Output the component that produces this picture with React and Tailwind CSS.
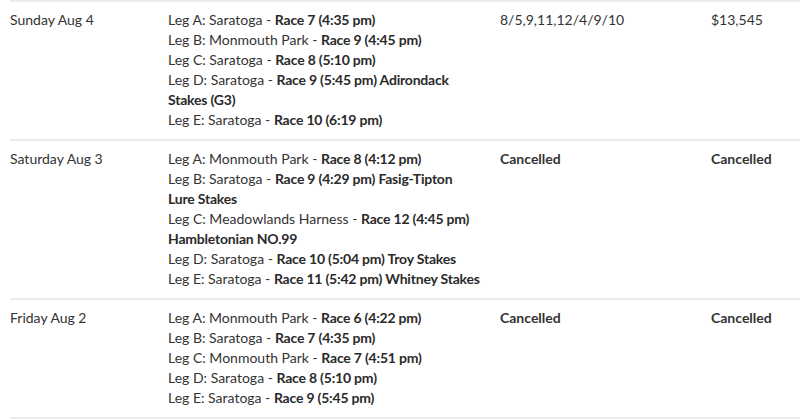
import React from "react";

const rows = [
  {
    date: "Sunday Aug 4",
    legs: [
      [["Leg A: Saratoga - ", false], ["Race 7 (4:35 pm)", true]],
      [["Leg B: Monmouth Park - ", false], ["Race 9 (4:45 pm)", true]],
      [["Leg C: Saratoga - ", false], ["Race 8 (5:10 pm)", true]],
      [["Leg D: Saratoga - ", false], ["Race 9 (5:45 pm) Adirondack", true]],
      [["Stakes (G3)", true]],
      [["Leg E: Saratoga - ", false], ["Race 10 (6:19 pm)", true]],
    ],
    combo: "8/5,9,11,12/4/9/10",
    payout: "$13,545",
    bold: false,
  },
  {
    date: "Saturday Aug 3",
    legs: [
      [["Leg A: Monmouth Park - ", false], ["Race 8 (4:12 pm)", true]],
      [["Leg B: Saratoga - ", false], ["Race 9 (4:29 pm) Fasig-Tipton", true]],
      [["Lure Stakes", true]],
      [["Leg C: Meadowlands Harness - ", false], ["Race 12 (4:45 pm)", true]],
      [["Hambletonian NO.99", true]],
      [["Leg D: Saratoga - ", false], ["Race 10 (5:04 pm) Troy Stakes", true]],
      [["Leg E: Saratoga - ", false], ["Race 11 (5:42 pm) Whitney Stakes", true]],
    ],
    combo: "Cancelled",
    payout: "Cancelled",
    bold: true,
  },
  {
    date: "Friday Aug 2",
    legs: [
      [["Leg A: Monmouth Park - ", false], ["Race 6 (4:22 pm)", true]],
      [["Leg B: Saratoga - ", false], ["Race 7 (4:35 pm)", true]],
      [["Leg C: Monmouth Park - ", false], ["Race 7 (4:51 pm)", true]],
      [["Leg D: Saratoga - ", false], ["Race 8 (5:10 pm)", true]],
      [["Leg E: Saratoga - ", false], ["Race 9 (5:45 pm)", true]],
    ],
    combo: "Cancelled",
    payout: "Cancelled",
    bold: true,
  },
];

export default function App() {
  return (
    <div
      className="w-[800px] h-[419px] overflow-hidden bg-white text-[#333333] text-[14px] leading-[20px]"
      style={{ fontFamily: "Lato, 'Open Sans', sans-serif" }}
    >
      <div className="ml-[10px] border-b-2 border-[#ececec]">
        {rows.map((r) => (
          <div
            key={r.date}
            className="grid grid-cols-[158px_332px_211px_1fr] border-t-2 border-[#ececec] pt-[8px] pb-[9px]"
          >
            <div>{r.date}</div>
            <div>
              {r.legs.map((line, i) => (
                <div key={i} className="whitespace-nowrap">
                  {line.map(([t, b], j) => (
                    <span key={j} className={b ? "font-bold text-[#2a2a2a] tracking-[-0.2px]" : ""}>
                      {t}
                    </span>
                  ))}
                </div>
              ))}
            </div>
            <div className={r.bold ? "font-bold" : ""}>{r.combo}</div>
            <div className={r.bold ? "font-bold" : ""}>{r.payout}</div>
          </div>
        ))}
      </div>
    </div>
  );
}
